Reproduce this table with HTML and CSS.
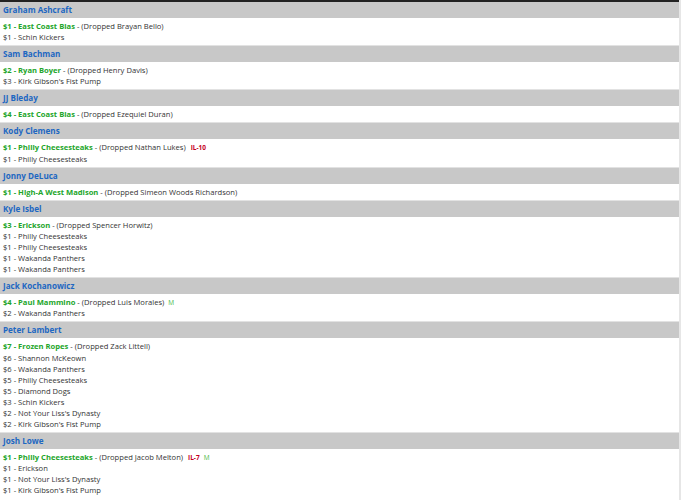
FILE: index.html
```html
<!DOCTYPE html>
<html>
<head>
<meta charset="utf-8">
<link rel="stylesheet" href="styles.css">
</head>
<body>
<div class="page">
  <div class="topbar"></div>

  <div class="player">
    <div class="name">Graham Ashcraft</div>
    <div class="bids">
      <div class="bid"><span class="win">$1 - East Coast Bias</span> - (Dropped Brayan Bello)</div>
      <div class="bid">$1 - Schin Kickers</div>
    </div>
  </div>

  <div class="player">
    <div class="name">Sam Bachman</div>
    <div class="bids">
      <div class="bid"><span class="win">$2 - Ryan Boyer</span> - (Dropped Henry Davis)</div>
      <div class="bid">$3 - Kirk Gibson's Fist Pump</div>
    </div>
  </div>

  <div class="player">
    <div class="name">JJ Bleday</div>
    <div class="bids">
      <div class="bid"><span class="win">$4 - East Coast Bias</span> - (Dropped Ezequiel Duran)</div>
    </div>
  </div>

  <div class="player">
    <div class="name">Kody Clemens</div>
    <div class="bids">
      <div class="bid"><span class="win">$1 - Philly Cheesesteaks</span> - (Dropped Nathan Lukes) <span class="il">IL-10</span></div>
      <div class="bid">$1 - Philly Cheesesteaks</div>
    </div>
  </div>

  <div class="player">
    <div class="name">Jonny DeLuca</div>
    <div class="bids">
      <div class="bid"><span class="win">$1 - High-A West Madison</span> - (Dropped Simeon Woods Richardson)</div>
    </div>
  </div>

  <div class="player">
    <div class="name">Kyle Isbel</div>
    <div class="bids">
      <div class="bid"><span class="win">$3 - Erickson</span> - (Dropped Spencer Horwitz)</div>
      <div class="bid">$1 - Philly Cheesesteaks</div>
      <div class="bid">$1 - Philly Cheesesteaks</div>
      <div class="bid">$1 - Wakanda Panthers</div>
      <div class="bid">$1 - Wakanda Panthers</div>
    </div>
  </div>

  <div class="player">
    <div class="name">Jack Kochanowicz</div>
    <div class="bids">
      <div class="bid"><span class="win">$4 - Paul Mammino</span> - (Dropped Luis Morales) <span class="m">M</span></div>
      <div class="bid">$2 - Wakanda Panthers</div>
    </div>
  </div>

  <div class="player">
    <div class="name">Peter Lambert</div>
    <div class="bids">
      <div class="bid"><span class="win">$7 - Frozen Ropes</span> - (Dropped Zack Littell)</div>
      <div class="bid">$6 - Shannon McKeown</div>
      <div class="bid">$6 - Wakanda Panthers</div>
      <div class="bid">$5 - Philly Cheesesteaks</div>
      <div class="bid">$5 - Diamond Dogs</div>
      <div class="bid">$3 - Schin Kickers</div>
      <div class="bid">$2 - Not Your Liss's Dynasty</div>
      <div class="bid">$2 - Kirk Gibson's Fist Pump</div>
    </div>
  </div>

  <div class="player">
    <div class="name">Josh Lowe</div>
    <div class="bids">
      <div class="bid"><span class="win">$1 - Philly Cheesesteaks</span> - (Dropped Jacob Melton) <span class="il">IL-7</span> <span class="m">M</span></div>
      <div class="bid">$1 - Erickson</div>
      <div class="bid">$1 - Not Your Liss's Dynasty</div>
      <div class="bid">$1 - Kirk Gibson's Fist Pump</div>
      <div class="bid">$1 - Philly Cheesesteaks</div>
    </div>
  </div>
</div>
</body>
</html>
```

FILE: styles.css
```css
html, body {
  margin: 0;
  padding: 0;
  background: #ffffff;
}
body {
  font-family: "Open Sans", "Liberation Sans", sans-serif;
  color: #333333;
}
.page {
  width: 679px;
  border-right: 2px solid #e6e6e6;
  min-height: 500px;
}
.topbar {
  height: 2px;
  background: #222222;
}
.name {
  height: 16px;
  line-height: 16px;
  background: #c8c8c8;
  color: #1d67c2;
  font-weight: 700;
  font-size: 8.1px;
  padding-left: 3px;
}
.bids {
  padding: 3px 3px 2px;
  border-bottom: 1px solid #e2e2e2;
  font-size: 7.6px;
}
.bid {
  height: 11.1px;
  line-height: 11.1px;
  white-space: nowrap;
}
.win {
  color: #22a52a;
  font-weight: 700;
}
.il {
  color: #c4001c;
  font-weight: 700;
  font-size: 6.5px;
  line-height: 1;
  margin-left: 3px;
}
.m {
  color: #4cbb4c;
  font-size: 6.5px;
  line-height: 1;
  margin-left: 2px;
}
```
